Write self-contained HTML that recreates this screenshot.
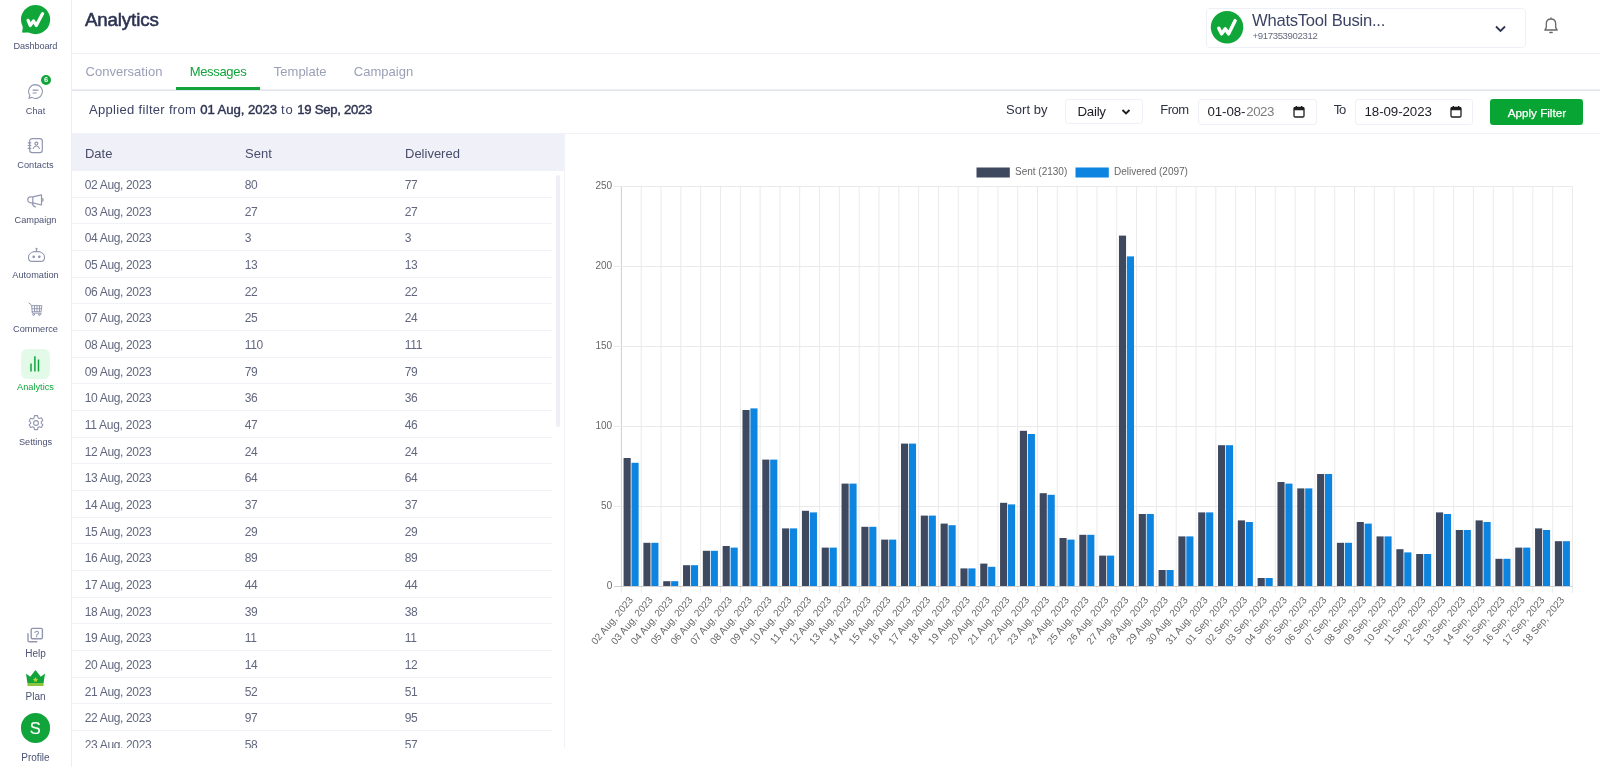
<!DOCTYPE html>
<html lang="en"><head><meta charset="utf-8"><title>Analytics</title>
<style>
*{box-sizing:border-box;margin:0;padding:0}
html,body{width:1600px;height:767px;overflow:hidden;background:#fff}
body{font-family:"Liberation Sans",sans-serif;color:#3c4364;position:relative}
#root{position:absolute;left:0;top:0;width:1600px;height:767px;overflow:hidden;will-change:transform;transform:translateZ(0)}
.abs{position:absolute}
.t{position:absolute;white-space:pre;font-family:"Liberation Sans",sans-serif}
#side{position:absolute;left:0;top:0;width:72px;height:767px;border-right:1px solid #eceef6;background:#fff}
.ico{position:absolute}
#hdr{position:absolute;left:72px;top:0;width:1528px;height:54px;border-bottom:1px solid #eef0f7}
#acct{position:absolute;left:1206px;top:8px;width:320px;height:40px;border:1px solid #eef0f8;border-radius:4px}
#tabs{position:absolute;left:72px;top:89px;width:1528px;height:3px}
#tabline{position:absolute;left:176px;top:87.4px;width:84px;height:2.7px;background:#10a43a}
#filt{position:absolute;left:72px;top:91px;width:1528px;height:43px;border-bottom:1px solid #f1f2f8}
.inp{position:absolute;border:1px solid #eff1f8;border-radius:3px;background:#fff}
#apply{position:absolute;left:1490px;top:99.2px;width:93.2px;height:25.7px;background:#08a535;border-radius:3px}
#thbg{position:absolute;left:72px;top:134px;width:492px;height:36.7px;background:#f0f1f8}
#tbody{position:absolute;left:0;top:170px;width:564px;height:578.3px;overflow:hidden}
.rl{position:absolute;left:72px;width:480px;height:1px;background:#f0f2f8}
#sb{position:absolute;left:556.2px;top:175px;width:3.6px;height:252px;border-radius:2px;background:#eeeff6}
#vdiv{position:absolute;left:564px;top:134px;width:1px;height:614px;background:#f0f2f8}
svg text.tk{font-family:"Liberation Sans",sans-serif;font-size:10px;fill:#666}

</style></head><body>
<div id="root">
<div id="side"></div>
<svg class="ico" style="left:20px;top:4px" width="32" height="32" viewBox="0 0 32 32"><circle cx="15.55" cy="15.55" r="14.6" fill="#11a63a"/><path d="M3.4 21.5 L2.6 28.200 L10.5 28 Z" fill="#11a63a" stroke="#11a63a" stroke-width="0.8" stroke-linejoin="round"/><path d="M8.1 16.3 L10.2 21.5 L13.5 16.9 L16.3 21.5 L22.6 9.6" fill="none" stroke="#fff" stroke-width="3.200" stroke-linecap="round" stroke-linejoin="round"/></svg>

<svg class="ico" style="left:27px;top:83px" width="17" height="17" viewBox="0 0 17 17" fill="none" stroke="#9297b0" stroke-width="1.1" stroke-linecap="round"><path d="M8.5 1.6a6.9 6.9 0 1 1-3.6 12.8L2 15.2l.8-2.9A6.9 6.9 0 0 1 8.5 1.6z"/><path d="M6 7.1h5M6 10h3.2"/></svg>
<div class="abs" style="left:41px;top:75px;width:10px;height:10px;border-radius:5px;background:#10a43a"></div>
<span class="t" style="left:44px;top:76.4px;font-size:7.6px;line-height:8px;color:#fff;font-weight:bold">6</span>

<svg class="ico" style="left:27px;top:137px" width="17" height="18" viewBox="0 0 17 18" fill="none" stroke="#9297b0" stroke-width="1.200" stroke-linecap="round"><rect x="2.700" y="1.600" width="12.600" height="14" rx="2.400"/><circle cx="9.350" cy="6.600" r="1.450"/><path d="M6.300 11.400c.6-1.600 1.700-2.400 3.050-2.400s2.450.8 3.050 2.400M1.200 5.800h2.600M1.200 8.500h2.600M1.200 11.400h2.600"/></svg>

<svg class="ico" style="left:26px;top:192px" width="19" height="17" viewBox="0 0 19 17" fill="none" stroke="#9297b0" stroke-width="1.200" stroke-linecap="round" stroke-linejoin="round"><path d="M6.800 4.900H4.700a2.950 2.950 0 0 0 0 5.900h2.100zM6.800 4.900L15.500 2.800v10.200L6.800 10.800M15.600 6.400a1.500 1.500 0 0 1 0 3M6.400 10.900c0 2 1.200 3.300 2.900 4"/></svg>

<svg class="ico" style="left:25.500px;top:246px" width="21" height="18" viewBox="0 0 21 18" fill="none" stroke="#9297b0" stroke-width="1.1" stroke-linecap="round" stroke-linejoin="round"><path d="M10.500 5.400c-4.800 0-8 2.500-8 6 0 2.400 1.600 4 3.600 4h8.800c2 0 3.600-1.600 3.600-4 0-3.500-3.200-6-8-6z"/><path d="M10.500 5.200V3.400"/><circle cx="10.500" cy="2.700" r=".5"/><circle cx="7.700" cy="10.800" r=".8" fill="#9297b0"/><circle cx="13.300" cy="10.800" r=".8" fill="#9297b0"/></svg>

<svg class="ico" style="left:26px;top:301px" width="18" height="17" viewBox="0 0 18 17" fill="none" stroke="#9297b0" stroke-width="0.950" stroke-linecap="round" stroke-linejoin="round"><path d="M2.900 2.100l1.700 1.100 1.100 1.500.6 7.500h9.200"/><path d="M5.700 4.700h10.200l-.8 6H6.200"/><path d="M8.500 4.700v6M11 4.700v6M13.500 4.700v6M6 7.700h9.500"/><circle cx="7.600" cy="13.600" r=".9"/><circle cx="13.400" cy="13.600" r=".9"/></svg>

<div class="abs" style="left:20.700px;top:349px;width:29.300px;height:29.500px;border-radius:6px;background:#e4fae8"></div>
<svg class="ico" style="left:27px;top:355px" width="16" height="18" viewBox="0 0 16 18" fill="none" stroke="#10a43a" stroke-width="1.500" stroke-linecap="butt"><path d="M4 8.600v8M7.900 1.200v15.400M11.500 4.500v12.100"/></svg>

<svg class="ico" style="left:26.500px;top:414px" width="18" height="18" viewBox="0 0 18 18" fill="none" stroke="#9297b0" stroke-width="1.1" stroke-linejoin="round"><circle cx="9" cy="9" r="2.400"/><path d="M7.500 1.600h3l.5 2.100 1.400.8 2-.7 1.500 2.600-1.600 1.500v1.400l1.600 1.500-1.500 2.600-2-.7-1.400.8-.5 2.100h-3l-.5-2.100-1.400-.8-2 .7-1.500-2.600 1.600-1.500V8.400L2.100 6.900l1.500-2.600 2 .7 1.400-.8z"/></svg>

<svg class="ico" style="left:26px;top:626.400px" width="18" height="18" viewBox="0 0 18 18" fill="none" stroke="#9297b0" stroke-width="1.400" stroke-linejoin="round" stroke-linecap="round"><rect x="5.200" y="2.400" width="11.200" height="10.300" rx="1.300"/><path d="M2 7.800v6.600a1.400 1.400 0 0 0 1.400 1.400h7.400"/><text x="10.800" y="10.700" font-family="Liberation Sans, sans-serif" font-size="9" fill="#9297b0" stroke="#9297b0" stroke-width="0.300" text-anchor="middle">?</text></svg>

<svg class="ico" style="left:25px;top:669px" width="21" height="18" viewBox="0 0 21 18"><path d="M1 4.500l4.200 3.300L10.500 1l5.300 6.800L20 4.500 18.600 14H2.400z" fill="#10a43a"/><rect x="2.400" y="14" width="16.200" height="3" fill="#8cc63f"/><path d="M10.500 8l.8 1.700 1.800.2-1.300 1.300.3 1.800-1.600-.9-1.600.9.300-1.800L7.900 9.900l1.800-.2z" fill="#b6d93a"/></svg>

<div class="abs" style="left:20.500px;top:713.200px;width:29.400px;height:29.400px;border-radius:15px;background:#10a43a"></div>
<span class="t" style="left:29.800px;top:719.500px;font-size:16.500px;line-height:17px;color:#fff;-webkit-text-stroke:0.15px #fff">S</span>
<span class="t" style="left:13.60px;top:41.51px;font-size:9.2px;line-height:9.2px;color:#4b5275;letter-spacing:-0.144px;">Dashboard</span>
<span class="t" style="left:25.79px;top:106.51px;font-size:9.2px;line-height:9.2px;color:#4b5275;">Chat</span>
<span class="t" style="left:17.37px;top:160.51px;font-size:9.2px;line-height:9.2px;color:#4b5275;">Contacts</span>
<span class="t" style="left:14.55px;top:216.21px;font-size:9.2px;line-height:9.2px;color:#4b5275;">Campaign</span>
<span class="t" style="left:12.26px;top:270.71px;font-size:9.2px;line-height:9.2px;color:#4b5275;">Automation</span>
<span class="t" style="left:13.03px;top:325.21px;font-size:9.2px;line-height:9.2px;color:#4b5275;">Commerce</span>
<span class="t" style="left:17.12px;top:382.51px;font-size:9.2px;line-height:9.2px;color:#10a43a;">Analytics</span>
<span class="t" style="left:18.90px;top:437.81px;font-size:9.2px;line-height:9.2px;color:#4b5275;">Settings</span>
<span class="t" style="left:25.21px;top:649.03px;font-size:10px;line-height:10px;color:#4b5275;">Help</span>
<span class="t" style="left:25.49px;top:692.13px;font-size:10px;line-height:10px;color:#4b5275;">Plan</span>
<span class="t" style="left:21.32px;top:753.24px;font-size:10px;line-height:10px;color:#4b5275;">Profile</span>
<div id="hdr"></div>
<div id="acct"></div>
<svg class="ico" style="left:1210px;top:10px" width="34" height="35" viewBox="0 0 34 35"><circle cx="17.050" cy="17.200" r="16.250" fill="#11a63a"/><path d="M8.800 18.300 L11.600 23.800 L15.300 18.900 L18.600 23.800 L25.100 10.700" fill="none" stroke="#fff" stroke-width="3.500" stroke-linecap="round" stroke-linejoin="round"/></svg>
<svg class="ico" style="left:1494px;top:23.600px" width="13" height="10" viewBox="0 0 13 10" fill="none" stroke="#2d3452" stroke-width="1.800"><path d="M2 2.500l4.500 4.500L11 2.500"/></svg>
<svg class="ico" style="left:1541.500px;top:16px" width="18" height="20" viewBox="0 0 18 20" fill="none" stroke="#666" stroke-width="1.300" stroke-linecap="round" stroke-linejoin="round"><path d="M9 3c-3 0-4.700 2.200-4.700 5v3.600L2.800 14h12.400l-1.500-2.400V8c0-2.800-1.700-5-4.700-5zM9 3V1.800M7.800 16.500h2.400"/></svg>
<svg id="tabs" viewBox="0 0 1528 3" width="1528" height="3"><rect x="0" y="0.300" width="1528" height="1.700" fill="#e3e6ee"/></svg>
<div id="tabline"></div>
<div id="filt"></div>
<div class="inp" style="left:1064.500px;top:99px;width:78px;height:24.500px"></div>
<svg class="ico" style="left:1121.100px;top:107.600px" width="10" height="8" viewBox="0 0 10 8" fill="none" stroke="#1e1e1e" stroke-width="1.900"><path d="M1.500 2l3.500 3.500L8.500 2"/></svg>
<div class="inp" style="left:1198px;top:99px;width:119px;height:25.500px"></div>
<svg class="ico cal" style="left:1293.100px;top:104.600px" width="12" height="13" viewBox="0 0 12 13"><rect x="1" y="2.300" width="10" height="9.700" rx="1.300" fill="none" stroke="#1e1e1e" stroke-width="1.300"/><path d="M1 3.500a1.200 1.200 0 0 1 1.200-1.200h7.600a1.200 1.200 0 0 1 1.200 1.200v1.700H1z" fill="#1e1e1e"/><path d="M3.400 0.900v2M8.600 0.900v2" stroke="#1e1e1e" stroke-width="1.300"/></svg>
<div class="inp" style="left:1355px;top:99px;width:118px;height:25.500px"></div>
<svg class="ico cal" style="left:1449.800px;top:104.600px" width="12" height="13" viewBox="0 0 12 13"><rect x="1" y="2.300" width="10" height="9.700" rx="1.300" fill="none" stroke="#1e1e1e" stroke-width="1.300"/><path d="M1 3.500a1.200 1.200 0 0 1 1.200-1.200h7.600a1.200 1.200 0 0 1 1.200 1.200v1.700H1z" fill="#1e1e1e"/><path d="M3.400 0.900v2M8.600 0.900v2" stroke="#1e1e1e" stroke-width="1.300"/></svg>
<div id="apply"></div>
<span class="t" style="left:84.90px;top:10.99px;font-size:18.8px;line-height:18.8px;color:#2d3452;letter-spacing:-0.157px;-webkit-text-stroke:0.55px #2d3452;">Analytics</span>
<span class="t" style="left:1252.00px;top:12.75px;font-size:16.6px;line-height:16.6px;color:#3c4364;letter-spacing:-0.242px;">WhatsTool Busin...</span>
<span class="t" style="left:1252.50px;top:31.37px;font-size:9.6px;line-height:9.6px;color:#666a7d;letter-spacing:-0.362px;">+917353902312</span>
<span class="t" style="left:85.60px;top:65.00px;font-size:13px;line-height:13px;color:#9a9fb6;letter-spacing:0.017px;">Conversation</span>
<span class="t" style="left:189.70px;top:65.00px;font-size:13px;line-height:13px;color:#10a43a;letter-spacing:-0.321px;">Messages</span>
<span class="t" style="left:273.80px;top:65.00px;font-size:13px;line-height:13px;color:#9a9fb6;letter-spacing:0.007px;">Template</span>
<span class="t" style="left:353.80px;top:65.00px;font-size:13px;line-height:13px;color:#9a9fb6;letter-spacing:0.033px;">Campaign</span>
<span class="t" style="left:89.00px;top:103.10px;font-size:13px;line-height:13px;color:#3c4364;letter-spacing:0.319px;">Applied filter from</span>
<span class="t" style="left:200.20px;top:102.93px;font-size:13.2px;line-height:13.2px;color:#2d3452;letter-spacing:-0.067px;-webkit-text-stroke:0.4px #2d3452;">01 Aug, 2023</span>
<span class="t" style="left:281.10px;top:103.10px;font-size:13px;line-height:13px;color:#3c4364;letter-spacing:0.756px;">to</span>
<span class="t" style="left:297.30px;top:102.93px;font-size:13.2px;line-height:13.2px;color:#2d3452;letter-spacing:-0.315px;-webkit-text-stroke:0.4px #2d3452;">19 Sep, 2023</span>
<span class="t" style="left:1006.00px;top:103.25px;font-size:13px;line-height:13px;color:#2f3345;letter-spacing:0.052px;">Sort by</span>
<span class="t" style="left:1077.50px;top:105.49px;font-size:13.3px;line-height:13.3px;color:#1c1d26;letter-spacing:-0.266px;">Daily</span>
<span class="t" style="left:1160.25px;top:103.25px;font-size:13px;line-height:13px;color:#2f3345;letter-spacing:-0.515px;">From</span>
<span class="t" style="left:1207.50px;top:105.49px;font-size:13.3px;line-height:13.3px;color:#1c1d26;letter-spacing:-0.087px;">01-08-</span><span class="t" style="left:1246.30px;top:105.49px;font-size:13.3px;line-height:13.3px;color:#7c7c80;letter-spacing:-0.498px;">2023</span>
<span class="t" style="left:1333.75px;top:103.10px;font-size:13px;line-height:13px;color:#2f3345;letter-spacing:-1.234px;">To</span>
<span class="t" style="left:1364.50px;top:105.49px;font-size:13.3px;line-height:13.3px;color:#1c1d26;letter-spacing:-0.070px;">18-09-2023</span>
<span class="t" style="left:1507.75px;top:106.85px;font-size:11.7px;line-height:11.7px;color:#fff;letter-spacing:-0.015px;-webkit-text-stroke:0.25px #fff;">Apply Filter</span>
<div id="thbg"></div>
<span class="t" style="left:85.00px;top:146.90px;font-size:13px;line-height:13px;color:#474d68;letter-spacing:-0.023px;">Date</span><span class="t" style="left:245.00px;top:146.90px;font-size:13px;line-height:13px;color:#474d68;">Sent</span><span class="t" style="left:405.00px;top:146.90px;font-size:13px;line-height:13px;color:#474d68;">Delivered</span>
<div id="tbody">
<div class="rl" style="top:26.52px"></div><span class="t" style="left:84.75px;top:8.94px;font-size:12px;line-height:12px;color:#62677f;letter-spacing:-0.349px;">02 Aug, 2023</span><span class="t" style="left:244.75px;top:8.94px;font-size:12px;line-height:12px;color:#62677f;letter-spacing:-0.330px;">80</span><span class="t" style="left:404.75px;top:8.94px;font-size:12px;line-height:12px;color:#62677f;letter-spacing:-0.330px;">77</span>
<div class="rl" style="top:53.18px"></div><span class="t" style="left:84.75px;top:35.61px;font-size:12px;line-height:12px;color:#62677f;letter-spacing:-0.349px;">03 Aug, 2023</span><span class="t" style="left:244.75px;top:35.61px;font-size:12px;line-height:12px;color:#62677f;letter-spacing:-0.330px;">27</span><span class="t" style="left:404.75px;top:35.61px;font-size:12px;line-height:12px;color:#62677f;letter-spacing:-0.330px;">27</span>
<div class="rl" style="top:79.85px"></div><span class="t" style="left:84.75px;top:62.28px;font-size:12px;line-height:12px;color:#62677f;letter-spacing:-0.349px;">04 Aug, 2023</span><span class="t" style="left:244.75px;top:62.28px;font-size:12px;line-height:12px;color:#62677f;letter-spacing:-0.330px;">3</span><span class="t" style="left:404.75px;top:62.28px;font-size:12px;line-height:12px;color:#62677f;letter-spacing:-0.330px;">3</span>
<div class="rl" style="top:106.52px"></div><span class="t" style="left:84.75px;top:88.94px;font-size:12px;line-height:12px;color:#62677f;letter-spacing:-0.349px;">05 Aug, 2023</span><span class="t" style="left:244.75px;top:88.94px;font-size:12px;line-height:12px;color:#62677f;letter-spacing:-0.330px;">13</span><span class="t" style="left:404.75px;top:88.94px;font-size:12px;line-height:12px;color:#62677f;letter-spacing:-0.330px;">13</span>
<div class="rl" style="top:133.18px"></div><span class="t" style="left:84.75px;top:115.61px;font-size:12px;line-height:12px;color:#62677f;letter-spacing:-0.349px;">06 Aug, 2023</span><span class="t" style="left:244.75px;top:115.61px;font-size:12px;line-height:12px;color:#62677f;letter-spacing:-0.330px;">22</span><span class="t" style="left:404.75px;top:115.61px;font-size:12px;line-height:12px;color:#62677f;letter-spacing:-0.330px;">22</span>
<div class="rl" style="top:159.85px"></div><span class="t" style="left:84.75px;top:142.28px;font-size:12px;line-height:12px;color:#62677f;letter-spacing:-0.349px;">07 Aug, 2023</span><span class="t" style="left:244.75px;top:142.28px;font-size:12px;line-height:12px;color:#62677f;letter-spacing:-0.330px;">25</span><span class="t" style="left:404.75px;top:142.28px;font-size:12px;line-height:12px;color:#62677f;letter-spacing:-0.330px;">24</span>
<div class="rl" style="top:186.52px"></div><span class="t" style="left:84.75px;top:168.94px;font-size:12px;line-height:12px;color:#62677f;letter-spacing:-0.349px;">08 Aug, 2023</span><span class="t" style="left:244.75px;top:168.94px;font-size:12px;line-height:12px;color:#62677f;letter-spacing:-0.330px;">110</span><span class="t" style="left:404.75px;top:168.94px;font-size:12px;line-height:12px;color:#62677f;letter-spacing:-0.330px;">111</span>
<div class="rl" style="top:213.18px"></div><span class="t" style="left:84.75px;top:195.61px;font-size:12px;line-height:12px;color:#62677f;letter-spacing:-0.349px;">09 Aug, 2023</span><span class="t" style="left:244.75px;top:195.61px;font-size:12px;line-height:12px;color:#62677f;letter-spacing:-0.330px;">79</span><span class="t" style="left:404.75px;top:195.61px;font-size:12px;line-height:12px;color:#62677f;letter-spacing:-0.330px;">79</span>
<div class="rl" style="top:239.85px"></div><span class="t" style="left:84.75px;top:222.28px;font-size:12px;line-height:12px;color:#62677f;letter-spacing:-0.349px;">10 Aug, 2023</span><span class="t" style="left:244.75px;top:222.28px;font-size:12px;line-height:12px;color:#62677f;letter-spacing:-0.330px;">36</span><span class="t" style="left:404.75px;top:222.28px;font-size:12px;line-height:12px;color:#62677f;letter-spacing:-0.330px;">36</span>
<div class="rl" style="top:266.52px"></div><span class="t" style="left:84.75px;top:248.94px;font-size:12px;line-height:12px;color:#62677f;letter-spacing:-0.268px;">11 Aug, 2023</span><span class="t" style="left:244.75px;top:248.94px;font-size:12px;line-height:12px;color:#62677f;letter-spacing:-0.330px;">47</span><span class="t" style="left:404.75px;top:248.94px;font-size:12px;line-height:12px;color:#62677f;letter-spacing:-0.330px;">46</span>
<div class="rl" style="top:293.18px"></div><span class="t" style="left:84.75px;top:275.61px;font-size:12px;line-height:12px;color:#62677f;letter-spacing:-0.349px;">12 Aug, 2023</span><span class="t" style="left:244.75px;top:275.61px;font-size:12px;line-height:12px;color:#62677f;letter-spacing:-0.330px;">24</span><span class="t" style="left:404.75px;top:275.61px;font-size:12px;line-height:12px;color:#62677f;letter-spacing:-0.330px;">24</span>
<div class="rl" style="top:319.85px"></div><span class="t" style="left:84.75px;top:302.28px;font-size:12px;line-height:12px;color:#62677f;letter-spacing:-0.349px;">13 Aug, 2023</span><span class="t" style="left:244.75px;top:302.28px;font-size:12px;line-height:12px;color:#62677f;letter-spacing:-0.330px;">64</span><span class="t" style="left:404.75px;top:302.28px;font-size:12px;line-height:12px;color:#62677f;letter-spacing:-0.330px;">64</span>
<div class="rl" style="top:346.52px"></div><span class="t" style="left:84.75px;top:328.94px;font-size:12px;line-height:12px;color:#62677f;letter-spacing:-0.349px;">14 Aug, 2023</span><span class="t" style="left:244.75px;top:328.94px;font-size:12px;line-height:12px;color:#62677f;letter-spacing:-0.330px;">37</span><span class="t" style="left:404.75px;top:328.94px;font-size:12px;line-height:12px;color:#62677f;letter-spacing:-0.330px;">37</span>
<div class="rl" style="top:373.18px"></div><span class="t" style="left:84.75px;top:355.61px;font-size:12px;line-height:12px;color:#62677f;letter-spacing:-0.349px;">15 Aug, 2023</span><span class="t" style="left:244.75px;top:355.61px;font-size:12px;line-height:12px;color:#62677f;letter-spacing:-0.330px;">29</span><span class="t" style="left:404.75px;top:355.61px;font-size:12px;line-height:12px;color:#62677f;letter-spacing:-0.330px;">29</span>
<div class="rl" style="top:399.85px"></div><span class="t" style="left:84.75px;top:382.28px;font-size:12px;line-height:12px;color:#62677f;letter-spacing:-0.349px;">16 Aug, 2023</span><span class="t" style="left:244.75px;top:382.28px;font-size:12px;line-height:12px;color:#62677f;letter-spacing:-0.330px;">89</span><span class="t" style="left:404.75px;top:382.28px;font-size:12px;line-height:12px;color:#62677f;letter-spacing:-0.330px;">89</span>
<div class="rl" style="top:426.52px"></div><span class="t" style="left:84.75px;top:408.94px;font-size:12px;line-height:12px;color:#62677f;letter-spacing:-0.349px;">17 Aug, 2023</span><span class="t" style="left:244.75px;top:408.94px;font-size:12px;line-height:12px;color:#62677f;letter-spacing:-0.330px;">44</span><span class="t" style="left:404.75px;top:408.94px;font-size:12px;line-height:12px;color:#62677f;letter-spacing:-0.330px;">44</span>
<div class="rl" style="top:453.18px"></div><span class="t" style="left:84.75px;top:435.61px;font-size:12px;line-height:12px;color:#62677f;letter-spacing:-0.349px;">18 Aug, 2023</span><span class="t" style="left:244.75px;top:435.61px;font-size:12px;line-height:12px;color:#62677f;letter-spacing:-0.330px;">39</span><span class="t" style="left:404.75px;top:435.61px;font-size:12px;line-height:12px;color:#62677f;letter-spacing:-0.330px;">38</span>
<div class="rl" style="top:479.85px"></div><span class="t" style="left:84.75px;top:462.28px;font-size:12px;line-height:12px;color:#62677f;letter-spacing:-0.349px;">19 Aug, 2023</span><span class="t" style="left:244.75px;top:462.28px;font-size:12px;line-height:12px;color:#62677f;letter-spacing:-0.330px;">11</span><span class="t" style="left:404.75px;top:462.28px;font-size:12px;line-height:12px;color:#62677f;letter-spacing:-0.330px;">11</span>
<div class="rl" style="top:506.52px"></div><span class="t" style="left:84.75px;top:488.94px;font-size:12px;line-height:12px;color:#62677f;letter-spacing:-0.349px;">20 Aug, 2023</span><span class="t" style="left:244.75px;top:488.94px;font-size:12px;line-height:12px;color:#62677f;letter-spacing:-0.330px;">14</span><span class="t" style="left:404.75px;top:488.94px;font-size:12px;line-height:12px;color:#62677f;letter-spacing:-0.330px;">12</span>
<div class="rl" style="top:533.18px"></div><span class="t" style="left:84.75px;top:515.61px;font-size:12px;line-height:12px;color:#62677f;letter-spacing:-0.349px;">21 Aug, 2023</span><span class="t" style="left:244.75px;top:515.61px;font-size:12px;line-height:12px;color:#62677f;letter-spacing:-0.330px;">52</span><span class="t" style="left:404.75px;top:515.61px;font-size:12px;line-height:12px;color:#62677f;letter-spacing:-0.330px;">51</span>
<div class="rl" style="top:559.85px"></div><span class="t" style="left:84.75px;top:542.28px;font-size:12px;line-height:12px;color:#62677f;letter-spacing:-0.349px;">22 Aug, 2023</span><span class="t" style="left:244.75px;top:542.28px;font-size:12px;line-height:12px;color:#62677f;letter-spacing:-0.330px;">97</span><span class="t" style="left:404.75px;top:542.28px;font-size:12px;line-height:12px;color:#62677f;letter-spacing:-0.330px;">95</span>
<div class="rl" style="top:586.52px"></div><span class="t" style="left:84.75px;top:568.94px;font-size:12px;line-height:12px;color:#62677f;letter-spacing:-0.349px;">23 Aug, 2023</span><span class="t" style="left:244.75px;top:568.94px;font-size:12px;line-height:12px;color:#62677f;letter-spacing:-0.330px;">58</span><span class="t" style="left:404.75px;top:568.94px;font-size:12px;line-height:12px;color:#62677f;letter-spacing:-0.330px;">57</span>
</div>
<div id="sb"></div>
<div id="vdiv"></div>
<svg id="chart" width="1036" height="627" viewBox="564 140 1036 627" style="position:absolute;left:564px;top:140px">
<line x1="621.40" y1="186.5" x2="621.40" y2="586.5" stroke="#cfcfcf" stroke-width="1"/>
<line x1="621.40" y1="586.5" x2="621.40" y2="592.8" stroke="#eaeaea" stroke-width="1"/>
<line x1="641.21" y1="186.5" x2="641.21" y2="586.5" stroke="#eaeaea" stroke-width="1"/>
<line x1="641.21" y1="586.5" x2="641.21" y2="592.8" stroke="#eaeaea" stroke-width="1"/>
<line x1="661.03" y1="186.5" x2="661.03" y2="586.5" stroke="#eaeaea" stroke-width="1"/>
<line x1="661.03" y1="586.5" x2="661.03" y2="592.8" stroke="#eaeaea" stroke-width="1"/>
<line x1="680.84" y1="186.5" x2="680.84" y2="586.5" stroke="#eaeaea" stroke-width="1"/>
<line x1="680.84" y1="586.5" x2="680.84" y2="592.8" stroke="#eaeaea" stroke-width="1"/>
<line x1="700.66" y1="186.5" x2="700.66" y2="586.5" stroke="#eaeaea" stroke-width="1"/>
<line x1="700.66" y1="586.5" x2="700.66" y2="592.8" stroke="#eaeaea" stroke-width="1"/>
<line x1="720.47" y1="186.5" x2="720.47" y2="586.5" stroke="#eaeaea" stroke-width="1"/>
<line x1="720.47" y1="586.5" x2="720.47" y2="592.8" stroke="#eaeaea" stroke-width="1"/>
<line x1="740.29" y1="186.5" x2="740.29" y2="586.5" stroke="#eaeaea" stroke-width="1"/>
<line x1="740.29" y1="586.5" x2="740.29" y2="592.8" stroke="#eaeaea" stroke-width="1"/>
<line x1="760.10" y1="186.5" x2="760.10" y2="586.5" stroke="#eaeaea" stroke-width="1"/>
<line x1="760.10" y1="586.5" x2="760.10" y2="592.8" stroke="#eaeaea" stroke-width="1"/>
<line x1="779.92" y1="186.5" x2="779.92" y2="586.5" stroke="#eaeaea" stroke-width="1"/>
<line x1="779.92" y1="586.5" x2="779.92" y2="592.8" stroke="#eaeaea" stroke-width="1"/>
<line x1="799.73" y1="186.5" x2="799.73" y2="586.5" stroke="#eaeaea" stroke-width="1"/>
<line x1="799.73" y1="586.5" x2="799.73" y2="592.8" stroke="#eaeaea" stroke-width="1"/>
<line x1="819.55" y1="186.5" x2="819.55" y2="586.5" stroke="#eaeaea" stroke-width="1"/>
<line x1="819.55" y1="586.5" x2="819.55" y2="592.8" stroke="#eaeaea" stroke-width="1"/>
<line x1="839.36" y1="186.5" x2="839.36" y2="586.5" stroke="#eaeaea" stroke-width="1"/>
<line x1="839.36" y1="586.5" x2="839.36" y2="592.8" stroke="#eaeaea" stroke-width="1"/>
<line x1="859.17" y1="186.5" x2="859.17" y2="586.5" stroke="#eaeaea" stroke-width="1"/>
<line x1="859.17" y1="586.5" x2="859.17" y2="592.8" stroke="#eaeaea" stroke-width="1"/>
<line x1="878.99" y1="186.5" x2="878.99" y2="586.5" stroke="#eaeaea" stroke-width="1"/>
<line x1="878.99" y1="586.5" x2="878.99" y2="592.8" stroke="#eaeaea" stroke-width="1"/>
<line x1="898.80" y1="186.5" x2="898.80" y2="586.5" stroke="#eaeaea" stroke-width="1"/>
<line x1="898.80" y1="586.5" x2="898.80" y2="592.8" stroke="#eaeaea" stroke-width="1"/>
<line x1="918.62" y1="186.5" x2="918.62" y2="586.5" stroke="#eaeaea" stroke-width="1"/>
<line x1="918.62" y1="586.5" x2="918.62" y2="592.8" stroke="#eaeaea" stroke-width="1"/>
<line x1="938.43" y1="186.5" x2="938.43" y2="586.5" stroke="#eaeaea" stroke-width="1"/>
<line x1="938.43" y1="586.5" x2="938.43" y2="592.8" stroke="#eaeaea" stroke-width="1"/>
<line x1="958.25" y1="186.5" x2="958.25" y2="586.5" stroke="#eaeaea" stroke-width="1"/>
<line x1="958.25" y1="586.5" x2="958.25" y2="592.8" stroke="#eaeaea" stroke-width="1"/>
<line x1="978.06" y1="186.5" x2="978.06" y2="586.5" stroke="#eaeaea" stroke-width="1"/>
<line x1="978.06" y1="586.5" x2="978.06" y2="592.8" stroke="#eaeaea" stroke-width="1"/>
<line x1="997.88" y1="186.5" x2="997.88" y2="586.5" stroke="#eaeaea" stroke-width="1"/>
<line x1="997.88" y1="586.5" x2="997.88" y2="592.8" stroke="#eaeaea" stroke-width="1"/>
<line x1="1017.69" y1="186.5" x2="1017.69" y2="586.5" stroke="#eaeaea" stroke-width="1"/>
<line x1="1017.69" y1="586.5" x2="1017.69" y2="592.8" stroke="#eaeaea" stroke-width="1"/>
<line x1="1037.51" y1="186.5" x2="1037.51" y2="586.5" stroke="#eaeaea" stroke-width="1"/>
<line x1="1037.51" y1="586.5" x2="1037.51" y2="592.8" stroke="#eaeaea" stroke-width="1"/>
<line x1="1057.32" y1="186.5" x2="1057.32" y2="586.5" stroke="#eaeaea" stroke-width="1"/>
<line x1="1057.32" y1="586.5" x2="1057.32" y2="592.8" stroke="#eaeaea" stroke-width="1"/>
<line x1="1077.14" y1="186.5" x2="1077.14" y2="586.5" stroke="#eaeaea" stroke-width="1"/>
<line x1="1077.14" y1="586.5" x2="1077.14" y2="592.8" stroke="#eaeaea" stroke-width="1"/>
<line x1="1096.95" y1="186.5" x2="1096.95" y2="586.5" stroke="#eaeaea" stroke-width="1"/>
<line x1="1096.95" y1="586.5" x2="1096.95" y2="592.8" stroke="#eaeaea" stroke-width="1"/>
<line x1="1116.76" y1="186.5" x2="1116.76" y2="586.5" stroke="#eaeaea" stroke-width="1"/>
<line x1="1116.76" y1="586.5" x2="1116.76" y2="592.8" stroke="#eaeaea" stroke-width="1"/>
<line x1="1136.58" y1="186.5" x2="1136.58" y2="586.5" stroke="#eaeaea" stroke-width="1"/>
<line x1="1136.58" y1="586.5" x2="1136.58" y2="592.8" stroke="#eaeaea" stroke-width="1"/>
<line x1="1156.39" y1="186.5" x2="1156.39" y2="586.5" stroke="#eaeaea" stroke-width="1"/>
<line x1="1156.39" y1="586.5" x2="1156.39" y2="592.8" stroke="#eaeaea" stroke-width="1"/>
<line x1="1176.21" y1="186.5" x2="1176.21" y2="586.5" stroke="#eaeaea" stroke-width="1"/>
<line x1="1176.21" y1="586.5" x2="1176.21" y2="592.8" stroke="#eaeaea" stroke-width="1"/>
<line x1="1196.02" y1="186.5" x2="1196.02" y2="586.5" stroke="#eaeaea" stroke-width="1"/>
<line x1="1196.02" y1="586.5" x2="1196.02" y2="592.8" stroke="#eaeaea" stroke-width="1"/>
<line x1="1215.84" y1="186.5" x2="1215.84" y2="586.5" stroke="#eaeaea" stroke-width="1"/>
<line x1="1215.84" y1="586.5" x2="1215.84" y2="592.8" stroke="#eaeaea" stroke-width="1"/>
<line x1="1235.65" y1="186.5" x2="1235.65" y2="586.5" stroke="#eaeaea" stroke-width="1"/>
<line x1="1235.65" y1="586.5" x2="1235.65" y2="592.8" stroke="#eaeaea" stroke-width="1"/>
<line x1="1255.47" y1="186.5" x2="1255.47" y2="586.5" stroke="#eaeaea" stroke-width="1"/>
<line x1="1255.47" y1="586.5" x2="1255.47" y2="592.8" stroke="#eaeaea" stroke-width="1"/>
<line x1="1275.28" y1="186.5" x2="1275.28" y2="586.5" stroke="#eaeaea" stroke-width="1"/>
<line x1="1275.28" y1="586.5" x2="1275.28" y2="592.8" stroke="#eaeaea" stroke-width="1"/>
<line x1="1295.10" y1="186.5" x2="1295.10" y2="586.5" stroke="#eaeaea" stroke-width="1"/>
<line x1="1295.10" y1="586.5" x2="1295.10" y2="592.8" stroke="#eaeaea" stroke-width="1"/>
<line x1="1314.91" y1="186.5" x2="1314.91" y2="586.5" stroke="#eaeaea" stroke-width="1"/>
<line x1="1314.91" y1="586.5" x2="1314.91" y2="592.8" stroke="#eaeaea" stroke-width="1"/>
<line x1="1334.72" y1="186.5" x2="1334.72" y2="586.5" stroke="#eaeaea" stroke-width="1"/>
<line x1="1334.72" y1="586.5" x2="1334.72" y2="592.8" stroke="#eaeaea" stroke-width="1"/>
<line x1="1354.54" y1="186.5" x2="1354.54" y2="586.5" stroke="#eaeaea" stroke-width="1"/>
<line x1="1354.54" y1="586.5" x2="1354.54" y2="592.8" stroke="#eaeaea" stroke-width="1"/>
<line x1="1374.35" y1="186.5" x2="1374.35" y2="586.5" stroke="#eaeaea" stroke-width="1"/>
<line x1="1374.35" y1="586.5" x2="1374.35" y2="592.8" stroke="#eaeaea" stroke-width="1"/>
<line x1="1394.17" y1="186.5" x2="1394.17" y2="586.5" stroke="#eaeaea" stroke-width="1"/>
<line x1="1394.17" y1="586.5" x2="1394.17" y2="592.8" stroke="#eaeaea" stroke-width="1"/>
<line x1="1413.98" y1="186.5" x2="1413.98" y2="586.5" stroke="#eaeaea" stroke-width="1"/>
<line x1="1413.98" y1="586.5" x2="1413.98" y2="592.8" stroke="#eaeaea" stroke-width="1"/>
<line x1="1433.80" y1="186.5" x2="1433.80" y2="586.5" stroke="#eaeaea" stroke-width="1"/>
<line x1="1433.80" y1="586.5" x2="1433.80" y2="592.8" stroke="#eaeaea" stroke-width="1"/>
<line x1="1453.61" y1="186.5" x2="1453.61" y2="586.5" stroke="#eaeaea" stroke-width="1"/>
<line x1="1453.61" y1="586.5" x2="1453.61" y2="592.8" stroke="#eaeaea" stroke-width="1"/>
<line x1="1473.43" y1="186.5" x2="1473.43" y2="586.5" stroke="#eaeaea" stroke-width="1"/>
<line x1="1473.43" y1="586.5" x2="1473.43" y2="592.8" stroke="#eaeaea" stroke-width="1"/>
<line x1="1493.24" y1="186.5" x2="1493.24" y2="586.5" stroke="#eaeaea" stroke-width="1"/>
<line x1="1493.24" y1="586.5" x2="1493.24" y2="592.8" stroke="#eaeaea" stroke-width="1"/>
<line x1="1513.06" y1="186.5" x2="1513.06" y2="586.5" stroke="#eaeaea" stroke-width="1"/>
<line x1="1513.06" y1="586.5" x2="1513.06" y2="592.8" stroke="#eaeaea" stroke-width="1"/>
<line x1="1532.87" y1="186.5" x2="1532.87" y2="586.5" stroke="#eaeaea" stroke-width="1"/>
<line x1="1532.87" y1="586.5" x2="1532.87" y2="592.8" stroke="#eaeaea" stroke-width="1"/>
<line x1="1552.69" y1="186.5" x2="1552.69" y2="586.5" stroke="#eaeaea" stroke-width="1"/>
<line x1="1552.69" y1="586.5" x2="1552.69" y2="592.8" stroke="#eaeaea" stroke-width="1"/>
<line x1="1572.50" y1="186.5" x2="1572.50" y2="586.5" stroke="#eaeaea" stroke-width="1"/>
<line x1="1572.50" y1="586.5" x2="1572.50" y2="592.8" stroke="#eaeaea" stroke-width="1"/>
<line x1="614.20" y1="586.5" x2="1572.5" y2="586.5" stroke="#cfcfcf" stroke-width="1"/>
<text x="612.20" y="588.9" text-anchor="end" class="tk">0</text>
<line x1="614.20" y1="506.5" x2="1572.5" y2="506.5" stroke="#eaeaea" stroke-width="1"/>
<text x="612.20" y="508.9" text-anchor="end" class="tk">50</text>
<line x1="614.20" y1="426.5" x2="1572.5" y2="426.5" stroke="#eaeaea" stroke-width="1"/>
<text x="612.20" y="428.9" text-anchor="end" class="tk">100</text>
<line x1="614.20" y1="346.5" x2="1572.5" y2="346.5" stroke="#eaeaea" stroke-width="1"/>
<text x="612.20" y="348.9" text-anchor="end" class="tk">150</text>
<line x1="614.20" y1="266.5" x2="1572.5" y2="266.5" stroke="#eaeaea" stroke-width="1"/>
<text x="612.20" y="268.9" text-anchor="end" class="tk">200</text>
<line x1="614.20" y1="186.5" x2="1572.5" y2="186.5" stroke="#eaeaea" stroke-width="1"/>
<text x="612.20" y="188.9" text-anchor="end" class="tk">250</text>
<rect x="623.58" y="458.00" width="7.13" height="128.00" fill="#3e4960"/>
<rect x="631.50" y="462.80" width="7.13" height="123.20" fill="#0d84df"/>
<text class="tk" text-anchor="end" transform="translate(633.61,600.20) rotate(-50)">02 Aug, 2023</text>
<rect x="643.39" y="542.80" width="7.13" height="43.20" fill="#3e4960"/>
<rect x="651.32" y="542.80" width="7.13" height="43.20" fill="#0d84df"/>
<text class="tk" text-anchor="end" transform="translate(653.42,600.20) rotate(-50)">03 Aug, 2023</text>
<rect x="663.21" y="581.20" width="7.13" height="4.80" fill="#3e4960"/>
<rect x="671.13" y="581.20" width="7.13" height="4.80" fill="#0d84df"/>
<text class="tk" text-anchor="end" transform="translate(673.24,600.20) rotate(-50)">04 Aug, 2023</text>
<rect x="683.02" y="565.20" width="7.13" height="20.80" fill="#3e4960"/>
<rect x="690.95" y="565.20" width="7.13" height="20.80" fill="#0d84df"/>
<text class="tk" text-anchor="end" transform="translate(693.05,600.20) rotate(-50)">05 Aug, 2023</text>
<rect x="702.84" y="550.80" width="7.13" height="35.20" fill="#3e4960"/>
<rect x="710.76" y="550.80" width="7.13" height="35.20" fill="#0d84df"/>
<text class="tk" text-anchor="end" transform="translate(712.87,600.20) rotate(-50)">06 Aug, 2023</text>
<rect x="722.65" y="546.00" width="7.13" height="40.00" fill="#3e4960"/>
<rect x="730.58" y="547.60" width="7.13" height="38.40" fill="#0d84df"/>
<text class="tk" text-anchor="end" transform="translate(732.68,600.20) rotate(-50)">07 Aug, 2023</text>
<rect x="742.47" y="410.00" width="7.13" height="176.00" fill="#3e4960"/>
<rect x="750.39" y="408.40" width="7.13" height="177.60" fill="#0d84df"/>
<text class="tk" text-anchor="end" transform="translate(752.49,600.20) rotate(-50)">08 Aug, 2023</text>
<rect x="762.28" y="459.60" width="7.13" height="126.40" fill="#3e4960"/>
<rect x="770.21" y="459.60" width="7.13" height="126.40" fill="#0d84df"/>
<text class="tk" text-anchor="end" transform="translate(772.31,600.20) rotate(-50)">09 Aug, 2023</text>
<rect x="782.09" y="528.40" width="7.13" height="57.60" fill="#3e4960"/>
<rect x="790.02" y="528.40" width="7.13" height="57.60" fill="#0d84df"/>
<text class="tk" text-anchor="end" transform="translate(792.12,600.20) rotate(-50)">10 Aug, 2023</text>
<rect x="801.91" y="510.80" width="7.13" height="75.20" fill="#3e4960"/>
<rect x="809.83" y="512.40" width="7.13" height="73.60" fill="#0d84df"/>
<text class="tk" text-anchor="end" transform="translate(811.94,600.20) rotate(-50)">11 Aug, 2023</text>
<rect x="821.72" y="547.60" width="7.13" height="38.40" fill="#3e4960"/>
<rect x="829.65" y="547.60" width="7.13" height="38.40" fill="#0d84df"/>
<text class="tk" text-anchor="end" transform="translate(831.75,600.20) rotate(-50)">12 Aug, 2023</text>
<rect x="841.54" y="483.60" width="7.13" height="102.40" fill="#3e4960"/>
<rect x="849.46" y="483.60" width="7.13" height="102.40" fill="#0d84df"/>
<text class="tk" text-anchor="end" transform="translate(851.57,600.20) rotate(-50)">13 Aug, 2023</text>
<rect x="861.35" y="526.80" width="7.13" height="59.20" fill="#3e4960"/>
<rect x="869.28" y="526.80" width="7.13" height="59.20" fill="#0d84df"/>
<text class="tk" text-anchor="end" transform="translate(871.38,600.20) rotate(-50)">14 Aug, 2023</text>
<rect x="881.17" y="539.60" width="7.13" height="46.40" fill="#3e4960"/>
<rect x="889.09" y="539.60" width="7.13" height="46.40" fill="#0d84df"/>
<text class="tk" text-anchor="end" transform="translate(891.20,600.20) rotate(-50)">15 Aug, 2023</text>
<rect x="900.98" y="443.60" width="7.13" height="142.40" fill="#3e4960"/>
<rect x="908.91" y="443.60" width="7.13" height="142.40" fill="#0d84df"/>
<text class="tk" text-anchor="end" transform="translate(911.01,600.20) rotate(-50)">16 Aug, 2023</text>
<rect x="920.80" y="515.60" width="7.13" height="70.40" fill="#3e4960"/>
<rect x="928.72" y="515.60" width="7.13" height="70.40" fill="#0d84df"/>
<text class="tk" text-anchor="end" transform="translate(930.83,600.20) rotate(-50)">17 Aug, 2023</text>
<rect x="940.61" y="523.60" width="7.13" height="62.40" fill="#3e4960"/>
<rect x="948.54" y="525.20" width="7.13" height="60.80" fill="#0d84df"/>
<text class="tk" text-anchor="end" transform="translate(950.64,600.20) rotate(-50)">18 Aug, 2023</text>
<rect x="960.43" y="568.40" width="7.13" height="17.60" fill="#3e4960"/>
<rect x="968.35" y="568.40" width="7.13" height="17.60" fill="#0d84df"/>
<text class="tk" text-anchor="end" transform="translate(970.46,600.20) rotate(-50)">19 Aug, 2023</text>
<rect x="980.24" y="563.60" width="7.13" height="22.40" fill="#3e4960"/>
<rect x="988.17" y="566.80" width="7.13" height="19.20" fill="#0d84df"/>
<text class="tk" text-anchor="end" transform="translate(990.27,600.20) rotate(-50)">20 Aug, 2023</text>
<rect x="1000.05" y="502.80" width="7.13" height="83.20" fill="#3e4960"/>
<rect x="1007.98" y="504.40" width="7.13" height="81.60" fill="#0d84df"/>
<text class="tk" text-anchor="end" transform="translate(1010.08,600.20) rotate(-50)">21 Aug, 2023</text>
<rect x="1019.87" y="430.80" width="7.13" height="155.20" fill="#3e4960"/>
<rect x="1027.80" y="434.00" width="7.13" height="152.00" fill="#0d84df"/>
<text class="tk" text-anchor="end" transform="translate(1029.90,600.20) rotate(-50)">22 Aug, 2023</text>
<rect x="1039.68" y="493.20" width="7.13" height="92.80" fill="#3e4960"/>
<rect x="1047.61" y="494.80" width="7.13" height="91.20" fill="#0d84df"/>
<text class="tk" text-anchor="end" transform="translate(1049.71,600.20) rotate(-50)">23 Aug, 2023</text>
<rect x="1059.50" y="538.00" width="7.13" height="48.00" fill="#3e4960"/>
<rect x="1067.42" y="539.60" width="7.13" height="46.40" fill="#0d84df"/>
<text class="tk" text-anchor="end" transform="translate(1069.53,600.20) rotate(-50)">24 Aug, 2023</text>
<rect x="1079.31" y="534.80" width="7.13" height="51.20" fill="#3e4960"/>
<rect x="1087.24" y="534.80" width="7.13" height="51.20" fill="#0d84df"/>
<text class="tk" text-anchor="end" transform="translate(1089.34,600.20) rotate(-50)">25 Aug, 2023</text>
<rect x="1099.13" y="555.60" width="7.13" height="30.40" fill="#3e4960"/>
<rect x="1107.05" y="555.60" width="7.13" height="30.40" fill="#0d84df"/>
<text class="tk" text-anchor="end" transform="translate(1109.16,600.20) rotate(-50)">26 Aug, 2023</text>
<rect x="1118.94" y="235.60" width="7.13" height="350.40" fill="#3e4960"/>
<rect x="1126.87" y="256.40" width="7.13" height="329.60" fill="#0d84df"/>
<text class="tk" text-anchor="end" transform="translate(1128.97,600.20) rotate(-50)">27 Aug, 2023</text>
<rect x="1138.76" y="514.00" width="7.13" height="72.00" fill="#3e4960"/>
<rect x="1146.68" y="514.00" width="7.13" height="72.00" fill="#0d84df"/>
<text class="tk" text-anchor="end" transform="translate(1148.79,600.20) rotate(-50)">28 Aug, 2023</text>
<rect x="1158.57" y="570.00" width="7.13" height="16.00" fill="#3e4960"/>
<rect x="1166.50" y="570.00" width="7.13" height="16.00" fill="#0d84df"/>
<text class="tk" text-anchor="end" transform="translate(1168.60,600.20) rotate(-50)">29 Aug, 2023</text>
<rect x="1178.39" y="536.40" width="7.13" height="49.60" fill="#3e4960"/>
<rect x="1186.31" y="536.40" width="7.13" height="49.60" fill="#0d84df"/>
<text class="tk" text-anchor="end" transform="translate(1188.42,600.20) rotate(-50)">30 Aug, 2023</text>
<rect x="1198.20" y="512.40" width="7.13" height="73.60" fill="#3e4960"/>
<rect x="1206.13" y="512.40" width="7.13" height="73.60" fill="#0d84df"/>
<text class="tk" text-anchor="end" transform="translate(1208.23,600.20) rotate(-50)">31 Aug, 2023</text>
<rect x="1218.02" y="445.20" width="7.13" height="140.80" fill="#3e4960"/>
<rect x="1225.94" y="445.20" width="7.13" height="140.80" fill="#0d84df"/>
<text class="tk" text-anchor="end" transform="translate(1228.04,600.20) rotate(-50)">01 Sep, 2023</text>
<rect x="1237.83" y="520.40" width="7.13" height="65.60" fill="#3e4960"/>
<rect x="1245.76" y="522.00" width="7.13" height="64.00" fill="#0d84df"/>
<text class="tk" text-anchor="end" transform="translate(1247.86,600.20) rotate(-50)">02 Sep, 2023</text>
<rect x="1257.64" y="578.00" width="7.13" height="8.00" fill="#3e4960"/>
<rect x="1265.57" y="578.00" width="7.13" height="8.00" fill="#0d84df"/>
<text class="tk" text-anchor="end" transform="translate(1267.67,600.20) rotate(-50)">03 Sep, 2023</text>
<rect x="1277.46" y="482.00" width="7.13" height="104.00" fill="#3e4960"/>
<rect x="1285.38" y="483.60" width="7.13" height="102.40" fill="#0d84df"/>
<text class="tk" text-anchor="end" transform="translate(1287.49,600.20) rotate(-50)">04 Sep, 2023</text>
<rect x="1297.27" y="488.40" width="7.13" height="97.60" fill="#3e4960"/>
<rect x="1305.20" y="488.40" width="7.13" height="97.60" fill="#0d84df"/>
<text class="tk" text-anchor="end" transform="translate(1307.30,600.20) rotate(-50)">05 Sep, 2023</text>
<rect x="1317.09" y="474.00" width="7.13" height="112.00" fill="#3e4960"/>
<rect x="1325.01" y="474.00" width="7.13" height="112.00" fill="#0d84df"/>
<text class="tk" text-anchor="end" transform="translate(1327.12,600.20) rotate(-50)">06 Sep, 2023</text>
<rect x="1336.90" y="542.80" width="7.13" height="43.20" fill="#3e4960"/>
<rect x="1344.83" y="542.80" width="7.13" height="43.20" fill="#0d84df"/>
<text class="tk" text-anchor="end" transform="translate(1346.93,600.20) rotate(-50)">07 Sep, 2023</text>
<rect x="1356.72" y="522.00" width="7.13" height="64.00" fill="#3e4960"/>
<rect x="1364.64" y="523.60" width="7.13" height="62.40" fill="#0d84df"/>
<text class="tk" text-anchor="end" transform="translate(1366.75,600.20) rotate(-50)">08 Sep, 2023</text>
<rect x="1376.53" y="536.40" width="7.13" height="49.60" fill="#3e4960"/>
<rect x="1384.46" y="536.40" width="7.13" height="49.60" fill="#0d84df"/>
<text class="tk" text-anchor="end" transform="translate(1386.56,600.20) rotate(-50)">09 Sep, 2023</text>
<rect x="1396.35" y="549.20" width="7.13" height="36.80" fill="#3e4960"/>
<rect x="1404.27" y="552.40" width="7.13" height="33.60" fill="#0d84df"/>
<text class="tk" text-anchor="end" transform="translate(1406.38,600.20) rotate(-50)">10 Sep, 2023</text>
<rect x="1416.16" y="554.00" width="7.13" height="32.00" fill="#3e4960"/>
<rect x="1424.09" y="554.00" width="7.13" height="32.00" fill="#0d84df"/>
<text class="tk" text-anchor="end" transform="translate(1426.19,600.20) rotate(-50)">11 Sep, 2023</text>
<rect x="1435.98" y="512.40" width="7.13" height="73.60" fill="#3e4960"/>
<rect x="1443.90" y="514.00" width="7.13" height="72.00" fill="#0d84df"/>
<text class="tk" text-anchor="end" transform="translate(1446.01,600.20) rotate(-50)">12 Sep, 2023</text>
<rect x="1455.79" y="530.00" width="7.13" height="56.00" fill="#3e4960"/>
<rect x="1463.72" y="530.00" width="7.13" height="56.00" fill="#0d84df"/>
<text class="tk" text-anchor="end" transform="translate(1465.82,600.20) rotate(-50)">13 Sep, 2023</text>
<rect x="1475.60" y="520.40" width="7.13" height="65.60" fill="#3e4960"/>
<rect x="1483.53" y="522.00" width="7.13" height="64.00" fill="#0d84df"/>
<text class="tk" text-anchor="end" transform="translate(1485.63,600.20) rotate(-50)">14 Sep, 2023</text>
<rect x="1495.42" y="558.80" width="7.13" height="27.20" fill="#3e4960"/>
<rect x="1503.35" y="558.80" width="7.13" height="27.20" fill="#0d84df"/>
<text class="tk" text-anchor="end" transform="translate(1505.45,600.20) rotate(-50)">15 Sep, 2023</text>
<rect x="1515.23" y="547.60" width="7.13" height="38.40" fill="#3e4960"/>
<rect x="1523.16" y="547.60" width="7.13" height="38.40" fill="#0d84df"/>
<text class="tk" text-anchor="end" transform="translate(1525.26,600.20) rotate(-50)">16 Sep, 2023</text>
<rect x="1535.05" y="528.40" width="7.13" height="57.60" fill="#3e4960"/>
<rect x="1542.97" y="530.00" width="7.13" height="56.00" fill="#0d84df"/>
<text class="tk" text-anchor="end" transform="translate(1545.08,600.20) rotate(-50)">17 Sep, 2023</text>
<rect x="1554.86" y="541.20" width="7.13" height="44.80" fill="#3e4960"/>
<rect x="1562.79" y="541.20" width="7.13" height="44.80" fill="#0d84df"/>
<text class="tk" text-anchor="end" transform="translate(1564.89,600.20) rotate(-50)">18 Sep, 2023</text>
<rect x="976.5" y="167.5" width="33.3" height="10" fill="#3e4960"/>
<text x="1015" y="175.3" class="tk">Sent (2130)</text>
<rect x="1075.5" y="167.5" width="33.3" height="10" fill="#0d84df"/>
<text x="1114" y="175.3" class="tk">Delivered (2097)</text>
</svg>
</div>
</body></html>
